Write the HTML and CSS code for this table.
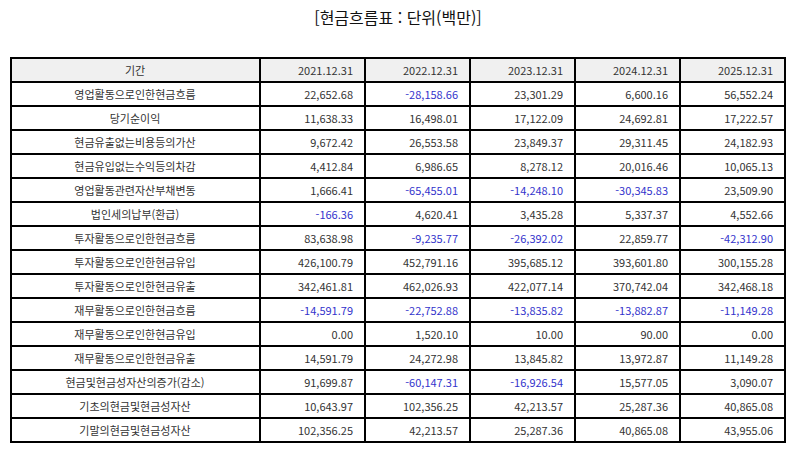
FILE: index.html
```html
<!DOCTYPE html>
<html lang="ko">
<head>
<meta charset="utf-8">
<link rel="stylesheet" href="styles.css">
</head>
<body>
<div class="page">
  <h1 class="title">[현금흐름표 : 단위(백만)]</h1>
  <table class="cf">
    <thead>
      <tr><th>기간</th><th>2021.12.31</th><th>2022.12.31</th><th>2023.12.31</th><th>2024.12.31</th><th>2025.12.31</th></tr>
    </thead>
    <tbody>
      <tr><td>영업활동으로인한현금흐름</td><td>22,652.68</td><td class="neg">-28,158.66</td><td>23,301.29</td><td>6,600.16</td><td>56,552.24</td></tr>
      <tr><td>당기순이익</td><td>11,638.33</td><td>16,498.01</td><td>17,122.09</td><td>24,692.81</td><td>17,222.57</td></tr>
      <tr><td>현금유출없는비용등의가산</td><td>9,672.42</td><td>26,553.58</td><td>23,849.37</td><td>29,311.45</td><td>24,182.93</td></tr>
      <tr><td>현금유입없는수익등의차감</td><td>4,412.84</td><td>6,986.65</td><td>8,278.12</td><td>20,016.46</td><td>10,065.13</td></tr>
      <tr><td>영업활동관련자산부채변동</td><td>1,666.41</td><td class="neg">-65,455.01</td><td class="neg">-14,248.10</td><td class="neg">-30,345.83</td><td>23,509.90</td></tr>
      <tr><td>법인세의납부(환급)</td><td class="neg">-166.36</td><td>4,620.41</td><td>3,435.28</td><td>5,337.37</td><td>4,552.66</td></tr>
      <tr><td>투자활동으로인한현금흐름</td><td>83,638.98</td><td class="neg">-9,235.77</td><td class="neg">-26,392.02</td><td>22,859.77</td><td class="neg">-42,312.90</td></tr>
      <tr><td>투자활동으로인한현금유입</td><td>426,100.79</td><td>452,791.16</td><td>395,685.12</td><td>393,601.80</td><td>300,155.28</td></tr>
      <tr><td>투자활동으로인한현금유출</td><td>342,461.81</td><td>462,026.93</td><td>422,077.14</td><td>370,742.04</td><td>342,468.18</td></tr>
      <tr><td>재무활동으로인한현금흐름</td><td class="neg">-14,591.79</td><td class="neg">-22,752.88</td><td class="neg">-13,835.82</td><td class="neg">-13,882.87</td><td class="neg">-11,149.28</td></tr>
      <tr><td>재무활동으로인한현금유입</td><td>0.00</td><td>1,520.10</td><td>10.00</td><td>90.00</td><td>0.00</td></tr>
      <tr><td>재무활동으로인한현금유출</td><td>14,591.79</td><td>24,272.98</td><td>13,845.82</td><td>13,972.87</td><td>11,149.28</td></tr>
      <tr><td>현금및현금성자산의증가(감소)</td><td>91,699.87</td><td class="neg">-60,147.31</td><td class="neg">-16,926.54</td><td>15,577.05</td><td>3,090.07</td></tr>
      <tr><td>기초의현금및현금성자산</td><td>10,643.97</td><td>102,356.25</td><td>42,213.57</td><td>25,287.36</td><td>40,865.08</td></tr>
      <tr><td>기말의현금및현금성자산</td><td>102,356.25</td><td>42,213.57</td><td>25,287.36</td><td>40,865.08</td><td>43,955.06</td></tr>
    </tbody>
  </table>
</div>
</body>
</html>
```
FILE: styles.css
```css
html, body {
  margin: 0;
  padding: 0;
  background: #ffffff;
}
body {
  font-family: "Noto Sans CJK KR", "Noto Sans", sans-serif;
  color: #333;
}
.page {
  padding: 4px 9px 0 10px;
}
.title {
  margin: 0;
  height: 53px;
  font-size: 16px;
  font-weight: normal;
  text-align: center;
  line-height: 26px;
  color: #111;
}
.cf {
  width: 776px;
  border: 1px solid #000;
  border-collapse: separate;
  border-spacing: 0;
  table-layout: fixed;
  font-size: 11px;
}
.cf th, .cf td {
  border: 1px solid #000;
  height: 22px;
  padding: 0 11px 0 10px;
  white-space: nowrap;
  line-height: 14px;
  box-sizing: content-box;
}
.cf th {
  background: #f0f0f0;
  font-weight: normal;
  text-align: right;
}
.cf th:first-child, .cf td:first-child {
  width: 226px;
  text-align: center;
}
.cf td {
  text-align: right;
}
.cf .neg {
  color: #3333cc;
}
```
